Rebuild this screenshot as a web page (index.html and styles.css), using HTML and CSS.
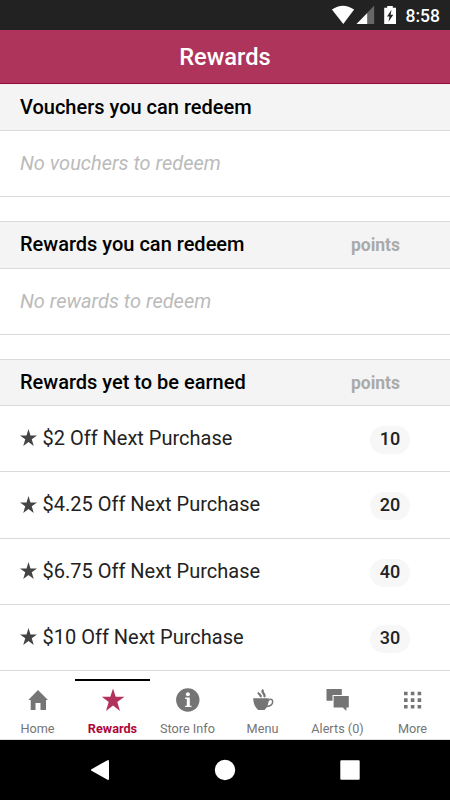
FILE: index.html
```html
<!DOCTYPE html>
<html lang="en">
<head>
<meta charset="utf-8">
<title>Rewards</title>
<link rel="stylesheet" href="styles.css">
</head>
<body>
<svg class="defs" aria-hidden="true"><symbol id="star" viewBox="0 0 24 24"><path d="M12 0l2.800 9H24l-7.400 5.400L19.400 24 12 18.200 4.600 24l2.800-9.600L0 9h9.200z"/></symbol></svg>
<div class="status">
  <svg class="signals" width="70" height="30" viewBox="0 0 70 30">
    <path fill="#fff" d="M.9 9.600Q12 1.700 23.100 9.600L12.300 24z"/>
    <path fill="#666" d="M43.200 5.500V24H25.500z"/>
    <path fill="#fff" d="M36.200 13.300V24H25.500z"/>
    <path fill="#fff" d="M56.200 6h5.600v1.800H65V24H53.200V7.800h3z"/>
    <path fill="#222" d="M60.500 9.800l-4.500 6.700h2.500l-1 5.300 4.800-7h-2.700z"/>
  </svg>
  <span>8:58</span>
</div>
<header class="title">Rewards</header>
<main>
  <section>
    <h2 class="first"><span>Vouchers you can redeem</span></h2>
    <div class="row empty"><span>No vouchers to redeem</span></div>
  </section>
  <section>
    <h2><span>Rewards you can redeem</span><small>points</small></h2>
    <div class="row empty"><span>No rewards to redeem</span></div>
  </section>
  <section>
    <h2><span>Rewards yet to be earned</span><small>points</small></h2>
    <div class="row"><svg class="star"><use href="#star"/></svg><span>$2 Off Next Purchase</span><b>10</b></div>
    <div class="row tall"><svg class="star"><use href="#star"/></svg><span>$4.25 Off Next Purchase</span><b>20</b></div>
    <div class="row"><svg class="star"><use href="#star"/></svg><span>$6.75 Off Next Purchase</span><b>40</b></div>
    <div class="row"><svg class="star"><use href="#star"/></svg><span>$10 Off Next Purchase</span><b>30</b></div>
  </section>
</main>
<nav class="tabs">
  <a><svg width="24" height="24" viewBox="0 0 24 24"><path d="M12 2L22 12H20V22H14.500V15H9.500v7H4.700V12H2.300z"/></svg><span>Home</span></a>
  <a class="active"><svg width="24" height="24" viewBox="0 0 24 24"><path d="M12 .5l2.700 8.300h8.800l-7.200 5.300 2.700 8.900-7-5.400-7 5.400 2.700-8.900L.8 8.800h8.500z"/></svg><span>Rewards</span></a>
  <a><svg width="24" height="24" viewBox="0 0 24 24"><circle cx="11.800" cy="12" r="11.700"/><g fill="#fff"><circle cx="11.900" cy="6.300" r="2"/><path d="M9.200 9.600h4.600v8.200h1.700v1.300H9.100v-1.300h1.700v-6.900H9.200z"/></g></svg><span>Store Info</span></a>
  <a><svg width="24" height="24" viewBox="0 0 24 24"><path d="M2.200 10.300h15.500c.2 5-1.400 9.300-4.200 11.700H7.300C4.300 19.800 2.300 15.500 2.200 10.300z"/><g fill="none" stroke="#757575"><path stroke-width="1.500" d="M17 13c1.600-2.500 4.700-2.200 4.700.8 0 2.600-2.700 4.800-5.800 4.600"/><path stroke-width="2.200" d="M7.800 4.300c-1.500 2 3.300 2.200 1.500 4.900M12.300 1.800c-3.300 3 3.200 3.700.8 7.400"/></g></svg><span>Menu</span></a>
  <a><svg width="24" height="24" viewBox="0 0 24 24"><path d="M.5 1h15.300v6H6.500v5.800h-6zM7.600 8h15.200v11.400h-2.400V23l-3.600-3.600H7.600z"/></svg><span>Alerts (0)</span></a>
  <a><svg width="24" height="24" viewBox="0 0 24 24"><path d="M3 3.700h3.600v3.600H3zm6.800 0h3.600v3.600H9.800zm6.800 0h3.600v3.600h-3.600zM3 10.300h3.600v3.600H3zm6.800 0h3.600v3.600H9.800zm6.800 0h3.600v3.600h-3.600zM3 17h3.600v3.600H3zm6.800 0h3.600v3.600H9.800zm6.800 0h3.600v3.600h-3.600z"/></svg><span>More</span></a>
</nav>
<div class="system">
  <svg width="450" height="60" viewBox="0 0 450 60" fill="#fff" stroke="#fff" stroke-width="2" stroke-linejoin="round"><path d="M92 30l16-9v18z"/><circle cx="225" cy="30" r="9.200"/><path d="M341.300 21.300h17.400v17.400h-17.400z"/></svg>
</div>
</body>
</html>
```
FILE: styles.css
```css
* { box-sizing: border-box; }
body {
  margin: 0;
  width: 450px;
  height: 800px;
  overflow: hidden;
  display: flex;
  flex-direction: column;
  background: #fff;
  color: #222;
  font-family: Roboto, sans-serif;
}
.defs { display: none; }
.status {
  flex: none;
  height: 30px;
  padding-right: 10px;
  background: #222;
  border-bottom: 1px solid #202020;
  color: #fff;
  display: flex;
  align-items: center;
  justify-content: flex-end;
  gap: 5px;
  font-size: 17.500px;
  font-weight: 500;
}
.status span { padding-top: 2px; }
.title {
  flex: none;
  height: 54px;
  background: #af345c;
  border-bottom: 1px solid #980b3e;
  color: #fff;
  font-size: 23.700px;
  font-weight: 500;
  line-height: 55px;
  text-align: center;
}
main { height: 587px; flex: none; }
section + section { margin-top: 24px; }
h2 {
  margin: 0;
  height: 48px;
  padding: 0 50px 2px 20px;
  border: solid #dadada;
  border-width: 1px 0;
  background: #f4f4f4;
  color: #000;
  display: flex;
  align-items: center;
  justify-content: space-between;
  font-size: 20px;
  font-weight: 500;
}
h2.first { height: 47px; border-top-color: #eee; }
section:last-child h2 { height: 47px; }
small { color: #aaa; font-size: 17.500px; font-weight: 700; padding-top: 2px; }
.row {
  height: 66px;
  padding: 0 40px 2px 20px;
  border-bottom: 1px solid #dadada;
  display: flex;
  align-items: center;
  font-size: 20px;
}
.tall { height: 67px; }
.empty { color: #bbb; font-style: italic; }
.star { width: 17px; height: 17px; margin-right: 5.500px; fill: #444; }
.row b {
  margin: 4px 0 0 auto;
  width: 40px;
  height: 28px;
  border-radius: 14px;
  background: #f7f7f7;
  text-align: center;
  font-size: 18px;
  font-weight: 500;
  line-height: 26px;
}
.tabs {
  flex: none;
  height: 69px;
  display: grid;
  grid-template-columns: repeat(6, 75px);
  border-bottom: 1px solid #ddd;
  color: #757575;
  fill: currentColor;
  font-size: 12.700px;
}
.tabs a {
  margin-top: 8px;
  padding-top: 9px;
  display: flex;
  flex-direction: column;
  align-items: center;
  white-space: nowrap;
}
.tabs span { margin-top: 9px; line-height: 15px; }
.tabs .active { color: #ad0739; border-top: 2px solid #000; padding-top: 7px; font-weight: 700; }
.active svg { fill: #b2325d; }
.system { flex: none; height: 60px; background: #000; }
.system svg { display: block; }
```
